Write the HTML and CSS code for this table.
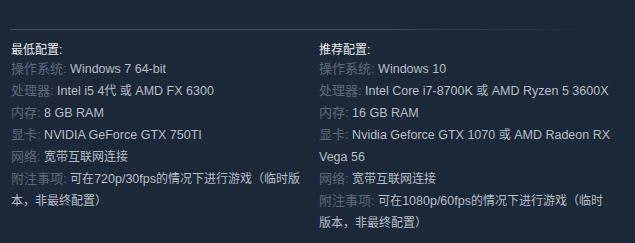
FILE: index.html
```html
<!DOCTYPE html>
<html lang="zh-CN">
<head>
<meta charset="utf-8">
<link rel="stylesheet" href="styles.css">
</head>
<body>
<div class="sysreq">
  <div class="divider"></div>
  <div class="cols">
    <div class="col">
      <div class="title"><span class="zh">最低配置</span>:</div>
      <ul class="list">
        <li><span class="label">操作系统:</span> Windows 7 64-bit</li>
        <li><span class="label">处理器:</span> Intel i5 4<span class="zh">代</span> <span class="zh">或</span> AMD FX 6300</li>
        <li><span class="label">内存:</span> 8 GB RAM</li>
        <li><span class="label">显卡:</span> NVIDIA GeForce GTX 750TI</li>
        <li><span class="label">网络:</span> <span class="zh">宽带互联网连接</span></li>
        <li><span class="label">附注事项:</span> <span class="zh">可在</span>720p/30fps<span class="zh">的情况下进行游戏（临时版本，非最终配置）</span></li>
      </ul>
    </div>
    <div class="col">
      <div class="title"><span class="zh">推荐配置</span>:</div>
      <ul class="list">
        <li><span class="label">操作系统:</span> Windows 10</li>
        <li><span class="label">处理器:</span> Intel Core i7-8700K <span class="zh">或</span> AMD Ryzen 5 3600X</li>
        <li><span class="label">内存:</span> 16 GB RAM</li>
        <li><span class="label">显卡:</span> Nvidia Geforce GTX 1070 <span class="zh">或</span> AMD Radeon RX Vega 56</li>
        <li><span class="label">网络:</span> <span class="zh">宽带互联网连接</span></li>
        <li><span class="label">附注事项:</span> <span class="zh">可在</span>1080p/60fps<span class="zh">的情况下进行游戏（临时版本，非最终配置）</span></li>
      </ul>
    </div>
  </div>
</div>
</body>
</html>
```
FILE: styles.css
```css
html, body {
  margin: 0;
  padding: 0;
  background: #1b2838;
  height: 100%;
}
.sysreq {
  padding: 29px 0 0 10px;
  font-family: "Liberation Sans", Arial, "Noto Sans CJK SC", sans-serif;
  font-size: 12.5px;
}
.divider {
  height: 1px;
  background: linear-gradient(to right, #3d4e60 0%, #3d4e60 60%, rgba(61,78,96,0) 92%);
}
.cols {
  display: flex;
  gap: 14px;
  padding: 12px 0 0 1px;
}
.col {
  width: 294px;
}
.title {
  color: #e6e9ec;
  line-height: 16px;
  height: 16px;
}
.list {
  list-style: none;
  margin: 0;
  padding: 0;
  color: #b6bec6;
  line-height: 22px;
}
.zh {
  font-size: 12px;
}
.label {
  font-size: 13px;
  color: #5b6a78;
}
```
